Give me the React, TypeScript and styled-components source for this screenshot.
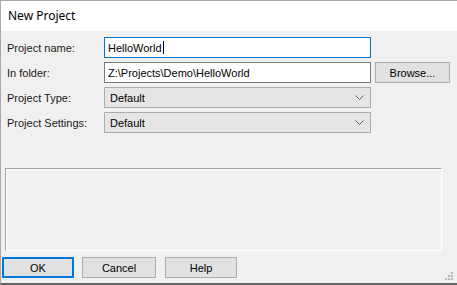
import React from "react";
import styled, { createGlobalStyle } from "styled-components";

const GlobalStyle = createGlobalStyle`
    html, body {
        margin: 0;
        padding: 0;
        background: #f0f0f0;
    }
    * {
        box-sizing: border-box;
    }
`

const Window = styled.div`
    position: relative;
    width: 457px;
    height: 285px;
    display: flex;
    flex-direction: column;
    border-top: 1px solid #a9a9a9;
    border-left: 1px solid #a9a9a9;
    border-bottom: 2px solid #646464;
    background: #f0f0f0;
    font-family: "Liberation Sans", Arial, sans-serif;
    font-size: 11px;
    color: #000;
`

const TitleBar = styled.div`
    height: 30px;
    flex: none;
    background: #fff;
    display: flex;
    align-items: center;
    padding-left: 7px;
    padding-bottom: 1px;
    font-family: "Noto Sans", "Open Sans", sans-serif;
    font-size: 12px;
`

const Body = styled.div`
    flex: 1;
    display: flex;
    flex-direction: column;
    padding: 6px 0 0 0;
`

const Form = styled.div`
    display: grid;
    grid-template-columns: 93px 267px 75px;
    grid-auto-rows: 21px;
    column-gap: 4px;
    row-gap: 4px;
    padding-left: 6px;

    & > label {
        display: flex;
        align-items: center;
        white-space: nowrap;
        color: #1a1a1a;
    }
`

const TextBox = styled.div<{ $focused?: boolean }>`
    height: 21px;
    display: flex;
    align-items: center;
    background: #fff;
    border: 1px solid ${p => (p.$focused ? "#0078d7" : "#7a7a7a")};
    padding-left: 3px;
    white-space: nowrap;
    overflow: hidden;
`

const Caret = styled.span`
    display: inline-block;
    width: 1px;
    height: 13px;
    background: #000;
    margin-left: 1px;
`

const Combo = styled.div`
    height: 21px;
    display: flex;
    align-items: center;
    justify-content: space-between;
    background: #e5e5e5;
    border: 1px solid #acacac;
    padding: 0 6px 0 5px;
`

const Button = styled.button<{ $default?: boolean }>`
    height: 21px;
    padding: 0;
    font: inherit;
    color: #000;
    background: #e1e1e1;
    border: 1px solid ${p => (p.$default ? "#0078d7" : "#adadad")};
    box-shadow: ${p => (p.$default ? "inset 0 0 0 1px #0078d7" : "none")};
    display: flex;
    align-items: center;
    justify-content: center;
`

const GroupBox = styled.div`
    margin: 35px 0 0 4px;
    width: 437px;
    height: 83px;
    border-top: 1px solid #a0a0a0;
    border-left: 1px solid #a0a0a0;
    border-right: 1px solid #fff;
    border-bottom: 1px solid #fff;
    box-shadow: inset 1px 1px 0 #fff;
`

const ButtonRow = styled.div`
    display: flex;
    margin: 6px 0 0 1px;

    & > button {
        width: 72px;
        margin-right: 8px;
    }
    & > button:nth-child(2) {
        width: 74px;
        margin-right: 9px;
    }
`

const Grip = styled.svg`
    position: absolute;
    right: 3px;
    bottom: 2px;
`

const Chevron: React.FC = () => (
    <svg width="9" height="5" viewBox="0 0 9 5">
        <path d="M0.5 0.5 L4.5 4.5 L8.5 0.5" fill="none" stroke="#606060" strokeWidth="1" />
    </svg>
)

const App: React.FC = () => {
    return (
        <>
            <GlobalStyle />
            <Window>
                <TitleBar>New Project</TitleBar>
                <Body>
                    <Form>
                        <label>Project name:</label>
                        <TextBox $focused>
                            HelloWorld
                            <Caret />
                        </TextBox>
                        <div />

                        <label>In folder:</label>
                        <TextBox>Z:\Projects\Demo\HelloWorld</TextBox>
                        <Button>Browse...</Button>

                        <label>Project Type:</label>
                        <Combo>
                            <span>Default</span>
                            <Chevron />
                        </Combo>
                        <div />

                        <label>Project Settings:</label>
                        <Combo>
                            <span>Default</span>
                            <Chevron />
                        </Combo>
                        <div />
                    </Form>

                    <GroupBox />

                    <ButtonRow>
                        <Button $default>OK</Button>
                        <Button>Cancel</Button>
                        <Button>Help</Button>
                    </ButtonRow>
                </Body>
                <Grip width="9" height="9" viewBox="0 0 9 9">
                    {[
                        [6, 0], [6, 3], [3, 3], [6, 6], [3, 6], [0, 6],
                    ].map(([x, y]) => (
                        <rect key={`${x}-${y}`} x={x} y={y} width="2" height="2" fill="#b8b8b8" />
                    ))}
                </Grip>
            </Window>
        </>
    )
}

export default App;
